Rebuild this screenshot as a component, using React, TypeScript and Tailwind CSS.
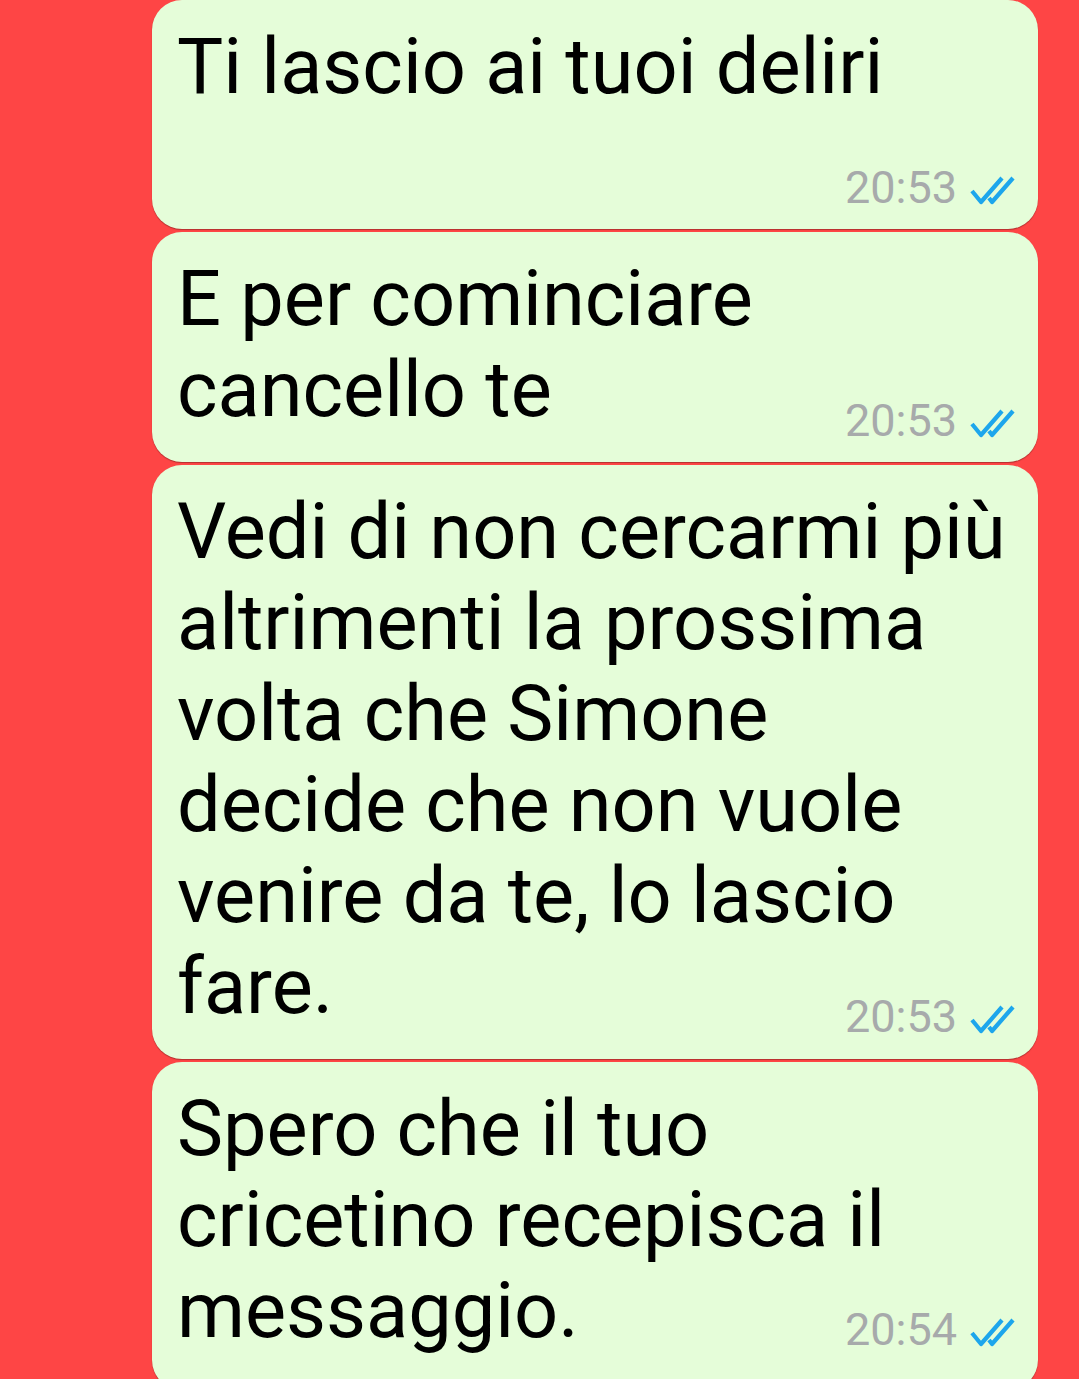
interface Message {
  id: number;
  lines: string[];
  time: string;
  // how far the time row is pulled up over the last text line
  timeOffset: string;
  bottomPad: string;
}

const messages: Message[] = [
  { id: 1, lines: ["Ti lascio ai tuoi deliri", ""], time: "20:53", timeOffset: "-mt-[35px]", bottomPad: "pb-[21px]" },
  { id: 2, lines: ["E per cominciare", "cancello te"], time: "20:53", timeOffset: "-mt-[34px]", bottomPad: "pb-[21px]" },
  {
    id: 3,
    lines: [
      "Vedi di non cercarmi più",
      "altrimenti la prossima",
      "volta che Simone",
      "decide che non vuole",
      "venire da te, lo lascio",
      "fare.",
    ],
    time: "20:53",
    timeOffset: "-mt-[35px]",
    bottomPad: "pb-[22px]",
  },
  {
    id: 4,
    lines: ["Spero che il tuo", "cricetino recepisca il", "messaggio."],
    time: "20:54",
    timeOffset: "-mt-[46px]",
    bottomPad: "pb-[40px]",
  },
];

function ReadTicks() {
  return (
    <svg width="46" height="30" viewBox="0 0 46 30" fill="none" className="ml-[12px] mt-[6px]">
      <path d="M3 15 L12 26 L33 2" stroke="#1da6ec" strokeWidth="4.2" strokeLinejoin="round" />
      <path d="M20 22 L23 26 L44 2" stroke="#1da6ec" strokeWidth="4.2" strokeLinejoin="round" />
    </svg>
  );
}

function Bubble({ message }: { message: Message }) {
  return (
    <div
      className={`flex flex-col rounded-[30px] bg-[#e5fdd9] pt-[21px] pl-[25px] pr-[23px] shadow-[0_1px_1px_rgba(90,20,20,0.45)] ${message.bottomPad}`}
    >
      <div className="text-[77.5px] leading-[91px] text-black">
        {message.lines.map((line, i) => (
          <div key={i} className="h-[91px] whitespace-nowrap">
            {line}
          </div>
        ))}
      </div>
      <div className={`flex h-[40px] items-center justify-end ${message.timeOffset}`}>
        <span className="text-[45px] leading-[40px] text-[#a7aaab]">{message.time}</span>
        <ReadTicks />
      </div>
    </div>
  );
}

export default function App() {
  return (
    <div className="h-[1379px] w-[1079px] overflow-hidden bg-[#fe4545] font-['Roboto',sans-serif]">
      <div className="ml-[152px] flex w-[886px] flex-col gap-[3px]">
        {messages.map((m) => (
          <Bubble key={m.id} message={m} />
        ))}
      </div>
    </div>
  );
}
